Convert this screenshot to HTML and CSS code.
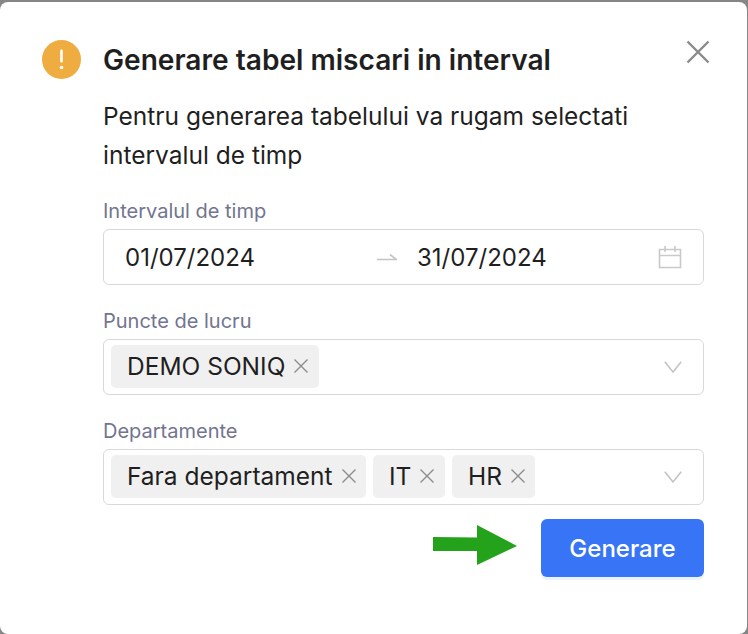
FILE: index.html
```html
<!DOCTYPE html>
<html lang="en">
<head>
    <meta charset="UTF-8">
    <meta name="viewport" content="width=device-width, initial-scale=1.0">
    <title>Generare tabel miscari</title>
    <link rel="stylesheet" href="styles.css">
</head>
<body>
    <div class="modal">
        <div class="modal-header">
            <svg class="warn-icon" width="39" height="39" viewBox="0 0 39 39">
                <circle cx="19.5" cy="19.5" r="19.5" fill="#efac41"/>
                <rect x="18.2" y="9.5" width="2.6" height="13" rx="1.3" fill="#fff"/>
                <circle cx="19.5" cy="27.5" r="1.8" fill="#fff"/>
            </svg>
            <h2 class="modal-title">Generare tabel miscari in interval</h2>
            <svg class="close-icon" width="24" height="24" viewBox="0 0 24 24">
                <path d="M1.5 1.5 L22.5 22.5 M22.5 1.5 L1.5 22.5" stroke="#8a8a8a" stroke-width="2.4" fill="none"/>
            </svg>
        </div>
        <div class="modal-body">
            <p class="modal-text">Pentru generarea tabelului va rugam selectati intervalul de timp</p>

            <div class="field">
                <label class="field-label">Intervalul de timp</label>
                <div class="input-box date-box">
                    <span class="date-value date-start">01/07/2024</span>
                    <svg class="date-sep" width="20" height="10" viewBox="0 0 20 10">
                        <path d="M0 7.5 H19.5 L13 2.5" stroke="#c4c4c4" stroke-width="1.6" fill="none"/>
                    </svg>
                    <span class="date-value">31/07/2024</span>
                    <svg class="calendar-icon" width="24" height="24" viewBox="0 0 24 24">
                        <path d="M1.5 4.5 H22.5 V22.5 H1.5 Z M1.5 10.5 H22.5 M7 1 V7 M17 1 V7" stroke="#c9c9c9" stroke-width="1.6" fill="none"/>
                    </svg>
                </div>
            </div>

            <div class="field">
                <label class="field-label">Puncte de lucru</label>
                <div class="input-box select-box">
                    <span class="tag">DEMO SONIQ
                        <svg class="tag-x" width="14" height="14" viewBox="0 0 14 14"><path d="M0.5 0.5 L13.5 13.5 M13.5 0.5 L0.5 13.5" stroke="#8c8c8c" stroke-width="1.4" fill="none"/></svg>
                    </span>
                    <svg class="chevron" width="18" height="12" viewBox="0 0 18 12"><path d="M0.8 0.8 L9 11 L17.2 0.8" stroke="#c4c4c4" stroke-width="1.6" fill="none"/></svg>
                </div>
            </div>

            <div class="field">
                <label class="field-label">Departamente</label>
                <div class="input-box select-box">
                    <span class="tag">Fara departament
                        <svg class="tag-x" width="14" height="14" viewBox="0 0 14 14"><path d="M0.5 0.5 L13.5 13.5 M13.5 0.5 L0.5 13.5" stroke="#8c8c8c" stroke-width="1.4" fill="none"/></svg>
                    </span>
                    <span class="tag">IT
                        <svg class="tag-x" width="14" height="14" viewBox="0 0 14 14"><path d="M0.5 0.5 L13.5 13.5 M13.5 0.5 L0.5 13.5" stroke="#8c8c8c" stroke-width="1.4" fill="none"/></svg>
                    </span>
                    <span class="tag">HR
                        <svg class="tag-x" width="14" height="14" viewBox="0 0 14 14"><path d="M0.5 0.5 L13.5 13.5 M13.5 0.5 L0.5 13.5" stroke="#8c8c8c" stroke-width="1.4" fill="none"/></svg>
                    </span>
                    <svg class="chevron" width="18" height="12" viewBox="0 0 18 12"><path d="M0.8 0.8 L9 11 L17.2 0.8" stroke="#c4c4c4" stroke-width="1.6" fill="none"/></svg>
                </div>
            </div>

            <div class="modal-footer">
                <svg class="green-arrow" width="84" height="40" viewBox="0 0 84 40">
                    <path d="M0 12 L44 12.5 V0 L84 21 L44 40 V26 L0 26 Z" fill="#25a21b"/>
                </svg>
                <button class="primary-btn">Generare</button>
            </div>
        </div>
    </div>
</body>
</html>
```

FILE: styles.css
```css
html, body {
    height: 100%;
}

body {
    margin: 0;
    background-color: #868686;
    font-family: 'Inter', 'Liberation Sans', sans-serif;
    color: #1f1f1f;
    overflow: hidden;
}

.modal {
    box-sizing: border-box;
    width: 747px;
    height: 632px;
    margin-top: 2px;
    padding: 38px 43px 0 42px;
    background: #ffffff;
    border-radius: 8px;
}

.modal-header {
    display: flex;
    align-items: center;
    height: 39px;
}

.warn-icon {
    flex: none;
    margin-right: 22px;
}

.modal-title {
    flex: 1;
    margin: 0;
    padding-top: 2px;
    font-size: 28.1px;
    font-weight: 600;
    line-height: 39px;
    white-space: nowrap;
}

.close-icon {
    flex: none;
    margin-right: -6px;
    margin-bottom: 16px;
}

.modal-body {
    margin-left: 61px;
}

.modal-text {
    margin: 18px 0 23px;
    width: 560px;
    font-size: 24.5px;
    line-height: 39px;
}

.field {
    margin-top: 23px;
}

.field-label {
    display: block;
    height: 26px;
    margin-bottom: 5px;
    font-size: 20px;
    line-height: 26px;
    color: #717590;
}

.input-box {
    box-sizing: border-box;
    display: flex;
    align-items: center;
    height: 56px;
    border: 1.4px solid #d9d9d9;
    border-radius: 6px;
    background: #fff;
}

.date-box {
    padding: 0 21px;
}

.date-value {
    flex: none;
    font-size: 24px;
}

.date-start {
    width: 252px;
}

.date-sep {
    flex: none;
    margin-right: 20px;
}

.calendar-icon {
    flex: none;
    margin-left: auto;
}

.select-box {
    gap: 7px;
    padding: 0 21px 0 7px;
}

.tag {
    display: flex;
    align-items: center;
    gap: 9px;
    height: 43px;
    margin-bottom: 2px;
    padding: 0 10.5px 0 16px;
    border-radius: 5px;
    background: #f0f0f0;
    font-size: 24.5px;
}

.tag-x {
    flex: none;
}

.chevron {
    flex: none;
    margin-left: auto;
}

.modal-footer {
    display: flex;
    align-items: center;
    justify-content: flex-end;
    gap: 24px;
    margin-top: 14px;
}

.green-arrow {
    flex: none;
    margin-top: -6px;
}

.primary-btn {
    width: 163px;
    height: 58px;
    border: none;
    border-radius: 6px;
    background: #3875f6;
    box-shadow: 0 3px 0 rgba(5, 100, 255, 0.08);
    color: #fff;
    font-family: inherit;
    font-size: 24px;
    font-weight: 500;
}
```
